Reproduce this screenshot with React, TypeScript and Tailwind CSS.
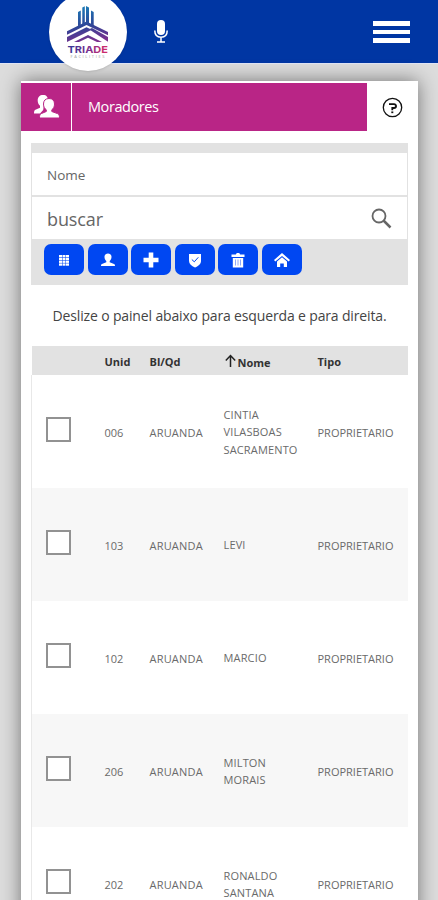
import type { ReactNode } from 'react';

const residents = [
  { unit: '006', name: ['CINTIA', 'VILASBOAS', 'SACRAMENTO'] },
  { unit: '103', name: ['LEVI'] },
  { unit: '102', name: ['MARCIO'] },
  { unit: '206', name: ['MILTON', 'MORAIS'] },
  { unit: '202', name: ['RONALDO', 'SANTANA'] },
];

function Logo() {
  return (
    <svg width="78" height="78" viewBox="0 0 78 78">
      <defs>
        <linearGradient id="brand" gradientUnits="userSpaceOnUse" x1="22" y1="50" x2="58" y2="56">
          <stop offset="0" stopColor="#3a3596" />
          <stop offset="0.5" stopColor="#7c3090" />
          <stop offset="1" stopColor="#d42a68" />
        </linearGradient>
        <linearGradient id="mark" gradientUnits="userSpaceOnUse" x1="36" y1="12" x2="42" y2="49">
          <stop offset="0" stopColor="#1b7db8" />
          <stop offset="0.55" stopColor="#2d4597" />
          <stop offset="1" stopColor="#7c2f8e" />
        </linearGradient>
      </defs>
      <g fill="url(#mark)">
        <path d="M29 19l2.800-1.500V32L29 33.300zM33.300 14.500l2.500-1.300v17.300l-2.500 1.200zM37 13l3 1.400v16.100L37 29zM42 17.500l2.700 1.400v13.600L42 31.200z" />
        <path d="M18 38.300L37.500 28.500 59 39v3.300L37.500 32 18 41.700z" />
        <path d="M18 44L37.500 34.300l5.200 2.500L18 49z" />
        <path d="M40 36.300l3-1.200L59 44v4.800z" />
        <path d="M25 49l14-7 14 7h-5l-9-4.300L30 49z" />
      </g>
      <text x="18.500" y="59.800" textLength="40.500" lengthAdjust="spacingAndGlyphs" fontFamily="Inter, sans-serif" fontWeight="700" fontSize="9.500" fill="url(#brand)">TRIADE</text>
      <text x="21.500" y="65.300" textLength="34" fontFamily="Open Sans, sans-serif" fontSize="4" fill="#999">FACILITIES</text>
    </svg>
  );
}

function Person() {
  return <path d="M8 1.500c2.300 0 3.500 1.500 3.500 3.600 0 1.800-.8 3.100-1.800 3.800v1.400l4.300 1.600c.8.300 1 1 1 2.100H1c0-1.100.2-1.800 1-2.100l4.300-1.600V8.900c-1-.7-1.800-2-1.800-3.800 0-2.100 1.200-3.600 3.500-3.600z" />;
}

function Action({ children }: { children: ReactNode }) {
  return (
    <button className="flex h-[31px] w-10 items-center justify-center rounded-[7px] bg-[#0047f2] text-white">
      <svg width="16" height="16" viewBox="0 0 16 16" fill="currentColor">{children}</svg>
    </button>
  );
}

export default function App() {
  return (
    <div className="h-[900px] w-[438px] overflow-hidden bg-[#dcdcdc] font-['Open_Sans',sans-serif]">
      <header className="flex h-16 items-start border-b border-[#dfe4f5] bg-[#0036a3]">
        <div className="relative z-10 -mt-[7px] ml-[49px] h-[78px] w-[78px] shrink-0 rounded-full bg-white shadow-sm">
          <Logo />
        </div>
        <svg className="mt-5 ml-[26px]" width="16" height="24" viewBox="0 0 16 24" fill="none">
          <rect x="4" y="0" width="8" height="15" rx="4" fill="#fff" />
          <path d="M1.800 10.500c0 4.500 2.400 6.700 6.200 6.700s6.200-2.200 6.200-6.700M8 17v4.500M4 22h8" stroke="#fff" strokeWidth="1.500" />
        </svg>
        <div className="mt-[21px] mr-7 ml-auto flex w-[37px] flex-col gap-[4px]">
          <i className="h-[5px] bg-white" />
          <i className="h-[4px] bg-white" />
          <i className="h-[5px] bg-white" />
        </div>
      </header>

      <main className="mx-5 mt-[17px] ml-[21px] h-[850px] bg-white shadow-[0_0_18px_rgba(0,0,0,0.48)]">
        <div className="flex h-[51px] pt-[2px]">
          <div className="flex h-[48px] w-[50px] items-center justify-center bg-[#b92586] text-white">
            <svg width="27" height="26" viewBox="0 0 27 26" fill="currentColor">
              <path d="M10 1c3.500 0 5 2 5 5.500l-4 4-.8 5.500-3.200 3.500H1c0-2.500.4-3.400 2-4l4-1.800v-2c-1.500-1.200-2.300-3-2.300-5.200C4.700 3 6.800 1 10 1z" />
              <path stroke="#b92586" strokeWidth="1" d="M16 4.500c3.700 0 5.500 2.200 5.500 5.500 0 2.700-1 4.700-2.700 5.800v1.700l5.700 2.100c1.500.6 2 1.700 2 4.400h-20c0-2.700.3-3.800 1.800-4.400l5-2.100v-1.700c-1.700-1.100-2.800-3.100-2.800-5.800 0-3.300 1.900-5.500 5.500-5.500z" />
            </svg>
          </div>
          <h1 className="ml-px flex h-[48px] w-[295px] items-center bg-[#b92586] pl-4 text-[14.500px] tracking-[-0.420px] text-white">Moradores</h1>
          <div className="flex h-[48px] flex-1 items-center justify-center">
            <svg width="21" height="21" viewBox="0 0 21 21" fill="none" stroke="#111">
              <circle cx="10.500" cy="10.500" r="9.200" strokeWidth="1.300" />
              <path d="M7 7.200h5c3 0 2.500 3.800 0 3.800h-1.700v2.200" strokeWidth="1.800" />
              <path d="M9.300 15.300h2" strokeWidth="1.700" />
            </svg>
          </div>
        </div>

        <section className="mt-[11px] mr-[10px] ml-[10px] h-[142px] bg-[#e2e2e2] px-px pt-[10px]">
          <div className="flex h-[42px] items-center bg-white px-[15px] pt-[3px] text-[13.500px] text-[#666]">Nome</div>
          <div className="mt-[2px] flex h-[42px] items-center justify-between bg-white pr-[15px] pl-[15px] text-[18px] text-[#666]">
            <span className="pt-[3px] tracking-[-0.100px]">buscar</span>
            <svg width="21" height="21" viewBox="0 0 21 21" fill="none" stroke="#666">
              <circle cx="8" cy="8" r="6.500" strokeWidth="1.800" />
              <path d="M12.500 12.500l7 7" strokeWidth="2.500" />
            </svg>
          </div>
          <div className="mt-[5px] ml-[12px] flex gap-[3.600px]">
            <Action>
              {[3.5, 6.3, 9.1, 11.9].map((y) => [3, 6.5, 10].map((x) => <rect key={`${x}-${y}`} x={x} y={y - 0.5} width="3" height="2.300" />))}
            </Action>
            <Action><Person /></Action>
            <Action><path d="M5.700.5h4.600v5.200h5.200v4.600h-5.200v5.200H5.700v-5.200H.5V5.700h5.200z" /></Action>
            <Action>
              <path d="M2 2h12v7c0 3-2.500 5-6 6.500C4.500 14 2 12 2 9z" />
              <path d="M4.800 7.500l2.500 2.300 4-4.500" stroke="#0047f2" fill="none" strokeWidth="1" />
            </Action>
            <Action>
              <path d="M1.500 2.500h4.300L6.800 1h2.400l1 1.500h4.300V5h-13zM2.800 6h10.400v9.500H2.800z" />
              <path d="M5.500 7.500v6M8 7.500v6M10.500 7.500v6" stroke="#8faaf8" />
            </Action>
            <Action>
              <path d="M8 1l8 7-1.300 1.500L8 3.900 1.300 9.500 0 8z" />
              <path d="M3 9.500L8 5.200l5 4.300V15H9.800v-3.500H6.200V15H3z" />
            </Action>
          </div>
        </section>

        <p className="flex h-[61px] items-center justify-center text-[14px] tracking-[-0.150px] whitespace-nowrap text-[#444]">Deslize o painel abaixo para esquerda e para direita.</p>

        <table className="ml-[10px] w-[377px] table-fixed border-collapse text-left text-[11px] text-[#6a6a6a]">
          <colgroup><col className="w-[73px]" /><col className="w-[45px]" /><col className="w-[74px]" /><col className="w-[94px]" /><col /></colgroup>
          <thead>
            <tr className="h-[29px] bg-[#e2e2e2] text-[#333]">
              <th />
              <th className="pt-[3px]">Unid</th>
              <th className="pt-[3px]">Bl/Qd</th>
              <th>
                <span className="flex items-center">
                  <svg width="13" height="14" viewBox="0 0 13 14" fill="none" stroke="#222" strokeWidth="1.500"><path d="M6.500 13V2M1.800 6.500l4.700-5 4.700 5" /></svg>
                  <span className="pt-[5px] pl-px">Nome</span>
                </span>
              </th>
              <th className="pt-[3px]">Tipo</th>
            </tr>
          </thead>
          <tbody>
            {residents.map(({ unit, name }) => (
              <tr key={unit} className="h-[113px] border-l border-[#e8e8e8] even:bg-[#f7f7f7]">
                <td className="pb-[5px] pl-[14px]"><span className="block h-[25px] w-[25px] border-2 border-[#929292] bg-white" /></td>
                <td className="pt-[3px]">{unit}</td>
                <td className="pt-[3px] tracking-[0.200px]">ARUANDA</td>
                <td className="pt-px leading-[17.500px] tracking-[0.150px]">{name.map((part) => <span className="block" key={part}>{part}</span>)}</td>
                <td className="pt-[3px]">PROPRIETARIO</td>
              </tr>
            ))}
          </tbody>
        </table>
      </main>
    </div>
  );
}
